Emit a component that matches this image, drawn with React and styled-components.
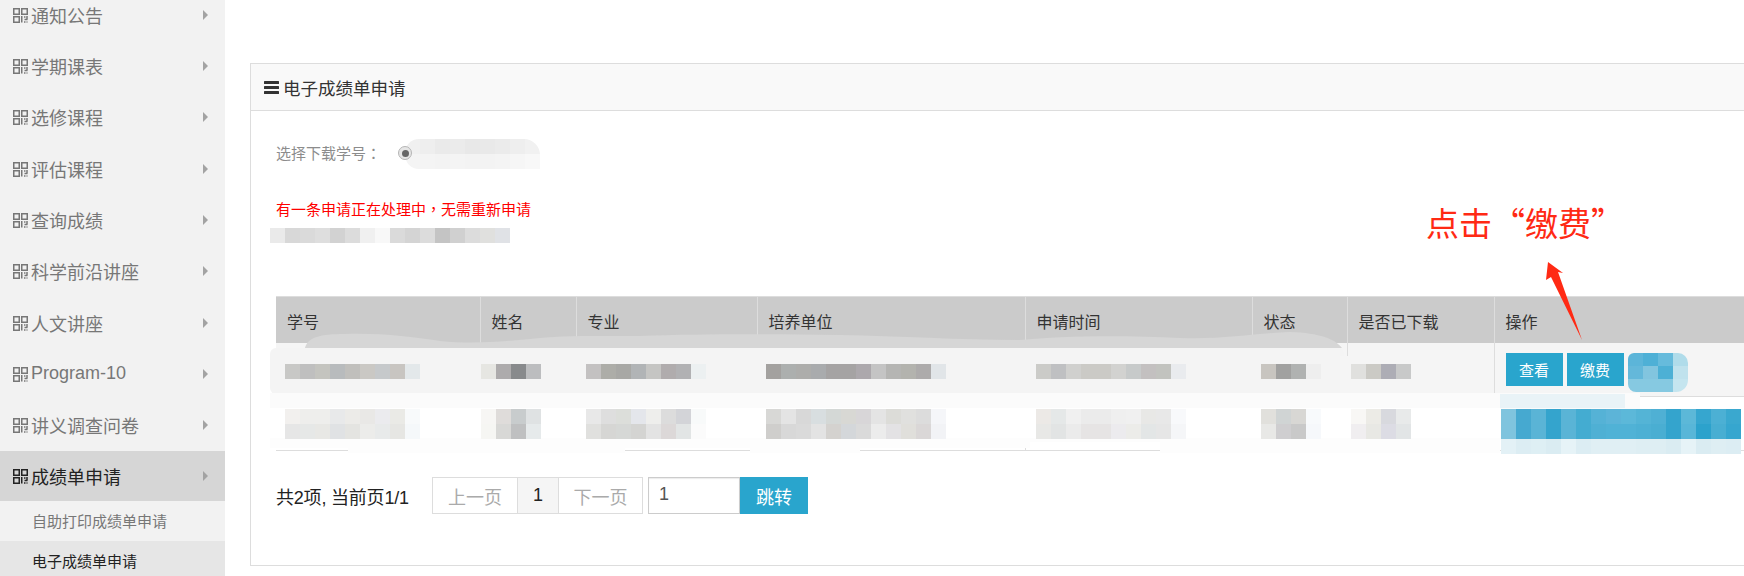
import styled, { createGlobalStyle } from "styled-components";

const GlobalStyle = createGlobalStyle`
  html, body {
    margin: 0;
    padding: 0;
    height: 576px;
    overflow: hidden;
    background: #fff;
    font-family: "Liberation Sans", "Noto Sans CJK SC", sans-serif;
  }
`;

const Page = styled.div`
  display: flex;
  width: 1744px;
  height: 576px;
  overflow: hidden;
`;

const Sidebar = styled.nav`
  flex: 0 0 225px;
  height: 576px;
  background: #f2f2f2;
  overflow: hidden;
`;

const MenuList = styled.div`
  margin-top: -11px;
`;

const MenuItem = styled.div`
  display: flex;
  align-items: center;
  height: ${(p) => (p.$active ? "50px" : "51.33px")};
  padding-left: 13px;
  font-size: 18px;
  color: ${(p) => (p.$active ? "#222" : "#777")};
  background: ${(p) => (p.$active ? "#d6d6d6" : "transparent")};
  svg {
    margin-top: 1px;
  }
`;

const MenuLabel = styled.span`
  flex: 1;
  margin-left: 3px;
`;

const Caret = styled.span`
  width: 0;
  height: 0;
  margin-right: 17px;
  border-left: 5px solid #a3a3a3;
  border-top: 5px solid transparent;
  border-bottom: 5px solid transparent;
`;

const SubItem = styled.div`
  display: flex;
  align-items: center;
  height: 40px;
  padding-left: 32px;
  font-size: 15px;
  color: ${(p) => (p.$active ? "#222" : "#777")};
  background: ${(p) => (p.$active ? "#e6e6e6" : "#f2f2f2")};
`;

const Main = styled.main`
  flex: 1;
  min-width: 0;
  padding: 63px 0 0 25px;
  overflow: hidden;
`;

const Panel = styled.section`
  position: relative;
  width: 1600px;
  height: 503px;
  box-sizing: border-box;
  border: 1px solid #ddd;
`;

const PanelHeader = styled.header`
  display: flex;
  align-items: center;
  gap: 4px;
  height: 46px;
  padding-left: 13px;
  background: #f9f9f9;
  border-bottom: 1px solid #ddd;
  font-size: 17.5px;
  color: #333;
`;

const PanelBody = styled.div`
  padding: 28px 0 0 25px;
`;

const FormRow = styled.div`
  display: flex;
  align-items: center;
  height: 30px;
  font-size: 15px;
  color: #8c8c8c;
`;

const FormLabel = styled.span`
  width: 122px;
  margin-top: -4px;
`;

const Punct = styled.span`
  font-family: "Noto Sans CJK TC", sans-serif;
`;

const Radio = styled.span`
  position: relative;
  z-index: 3;
  display: flex;
  align-items: center;
  justify-content: center;
  width: 14px;
  height: 14px;
  margin-top: -2px;
  box-sizing: border-box;
  border: 1px solid #b5b5b5;
  border-radius: 50%;
  background: #e6e6e6;
  &::after {
    content: "";
    width: 7px;
    height: 7px;
    border-radius: 50%;
    background: #666;
  }
`;

const Notice = styled.div`
  margin-top: 30px;
  margin-bottom: 1px;
  height: 20px;
  line-height: 20px;
  font-size: 15px;
  color: #ff0000;
`;

const MosaicGrid = styled.div`
  position: relative;
  z-index: 2;
  display: grid;
  grid-template-columns: repeat(${(p) => p.$cols}, 15px);
  grid-auto-rows: ${(p) => p.$rowHeight || 15}px;
  width: max-content;
  margin-left: ${(p) => p.$left || 0}px;
  margin-top: ${(p) => p.$top || 0}px;
  margin-bottom: ${(p) => p.$bottom || 0}px;
  border-radius: ${(p) => p.$radius || "0"};
  overflow: hidden;
`;

const TableWrap = styled.div`
  position: relative;
  margin-top: 53px;
  width: 1468px;
`;

const Table = styled.table`
  width: 1468px;
  table-layout: fixed;
  border-collapse: collapse;
  font-size: 16px;
  color: #333;
`;

const HeadCell = styled.th`
  height: 46px;
  box-sizing: border-box;
  padding: 2px 0 0 11px;
  background: #cbcbcb;
  border-top: 1px solid #ddd;
  border-right: 1px solid #ddd;
  font-weight: normal;
  text-align: left;
  vertical-align: middle;
`;

const Cell = styled.td`
  height: 54px;
  box-sizing: border-box;
  padding: 0;
  vertical-align: top;
  background: ${(p) => (p.$odd ? "#f5f5f5" : "#fff")};
  border-right: 1px solid #ddd;
  border-bottom: 1px solid #ddd;
`;

const Smudge = styled.svg`
  position: absolute;
  left: -26px;
  top: -12px;
  z-index: 1;
  pointer-events: none;
`;

const Actions = styled.div`
  position: relative;
  z-index: 2;
  display: flex;
  gap: 4px;
  margin: 10px 0 0 11px;
`;

const ActionButton = styled.button`
  width: 57px;
  height: 33px;
  padding: 0;
  border: 0;
  background: #29a5cd;
  color: #fff;
  font: inherit;
  font-size: 15px;
`;

const Pager = styled.div`
  display: flex;
  align-items: center;
  height: 37px;
  margin-top: 26px;
  font-size: 18px;
  color: #222;
`;

const PagerSummary = styled.span`
  width: 157px;
  letter-spacing: -0.2px;
`;

const PageLink = styled.span`
  display: flex;
  align-items: center;
  justify-content: center;
  box-sizing: border-box;
  width: ${(p) => p.$width}px;
  height: 37px;
  margin-left: -1px;
  border: 1px solid #ddd;
  color: ${(p) => (p.$current ? "#222" : "#aaa")};
  background: ${(p) => (p.$current ? "#f5f5f5" : "#fff")};
`;

const JumpInput = styled.input`
  box-sizing: border-box;
  width: 92px;
  height: 37px;
  margin-left: 5px;
  padding: 0 0 2px 10px;
  border: 1px solid #ccc;
  border-radius: 0;
  outline: 0;
  box-shadow: inset 0 1px 1px rgba(0, 0, 0, 0.08);
  font: inherit;
  color: #555;
`;

const JumpButton = styled.button`
  width: 68px;
  height: 37px;
  padding: 0;
  border: 0;
  background: #29a5cd;
  color: #fff;
  font: inherit;
`;

const Annotation = styled.div`
  position: absolute;
  left: 1175px;
  top: 135px;
  font-family: "Noto Sans CJK SC", sans-serif;
  font-size: 33px;
  line-height: 46px;
  color: #ff2a14;
  white-space: nowrap;
`;

const AnnotationArrow = styled.svg`
  position: absolute;
  left: 1290px;
  top: 195px;
  z-index: 3;
`;

const QrIcon = () => (
  <svg width="15" height="15" viewBox="0 0 15 15" fill="none" stroke="currentColor" strokeWidth="1.5">
    <rect x="0.75" y="0.75" width="5.5" height="5.5" />
    <rect x="8.75" y="0.75" width="5.5" height="5.5" />
    <rect x="0.75" y="8.75" width="5.5" height="5.5" />
    <path d="M8.75 8v6.5M11 9h1.5M14 8v3.5M11.5 11.5h3M11 14h1.5M14 13.5v1" />
  </svg>
);

const BarsIcon = () => (
  <svg width="15" height="13" viewBox="0 0 15 13" fill="#333">
    <rect y="0" width="15" height="3" rx="0.5" />
    <rect y="5" width="15" height="3" rx="0.5" />
    <rect y="10" width="15" height="3" rx="0.5" />
  </svg>
);

const Mosaic = ({ colors, cols, left, top, bottom, radius, rowHeight }) => (
  <MosaicGrid $cols={cols} $left={left} $top={top} $bottom={bottom} $radius={radius} $rowHeight={rowHeight}>
    {colors.split(" ").map((c, i) => (
      <div key={i} style={{ background: "#" + c }} />
    ))}
  </MosaicGrid>
);

const menu = ["通知公告", "学期课表", "选修课程", "评估课程", "查询成绩", "科学前沿讲座", "人文讲座", "Program-10", "讲义调查问卷"];

const columns = [
  ["学号", 204],
  ["姓名", 96],
  ["专业", 181],
  ["培养单位", 268],
  ["申请时间", 227],
  ["状态", 95],
  ["是否已下载", 147],
  ["操作", 250],
];

const rowOne = [
  { left: 9, cols: 9, colors: "c8c8c6 bfbfbf c4c4bf b8bbbd c0bfbc cac8c4 c6c9cb c8c5c1 e3e8ea" },
  { left: 0, cols: 4, colors: "e6e6e2 adabac 888a8c bcbdbf" },
  { left: 9, cols: 8, colors: "c3c1c1 adada8 a8a8a5 b1b4b6 c5c5c3 b0acad b1b1b3 ecf0f1" },
  { left: 8, cols: 12, colors: "a3a19f acafae adadab a9abad a5a3a3 a5a3a3 aca8ac c4c4c4 b5b5b3 b3b3ae adabab e1e5e8" },
  { left: 10, cols: 10, colors: "cbcbc8 bfc0c2 d0d0ce cbcac6 cbcac6 d2d2d0 c7caca c3c0c0 c2c3bf e9ebee" },
  { left: 8, cols: 4, colors: "c8c5c0 a1a1a0 b0b2b1 eeeeee" },
  { left: 3, cols: 4, colors: "e0e0de cbcac5 adadb5 c8c9c9" },
];

const rowTwo = [
  { left: 9, cols: 9, colors: "f2f0ee eeeeec eeeeec e8e9ea ecebe8 e9e8e6 ebebee eaeae6 f8fafb e6e6e6 e6e8e7 e8e8e5 e0e2e4 e4e4e1 ececea e8eaea e6e6e3 f5f8fa" },
  { left: 0, cols: 4, colors: "f7f6f4 dfdcda c8cccd dfe2e3 f6f6f3 d8d8d6 bfc0c1 e6eaeb" },
  { left: 9, cols: 8, colors: "e8e8e8 dedede dcdeda e4e6eb eeeeec dcdcdc d3d4d8 f8fafa e0e0de d6d6d4 d6d8d6 d4d4d2 e3e3e3 dcd8d8 e2e5e5 fbfbfb" },
  { left: 8, cols: 12, colors: "d8d8d6 e4e4e4 d8d8d8 d8dee0 d4d8d6 d8d8d4 d8d6d8 e4e4e4 dcdcd8 e0e0de dcdcdc f5f6f9 cfcecc d8d8d8 dadada e3e3e3 d4d2cf d4d7da dadada ececec e3e2e4 e0dfdb dad7d7 f2f3f6" },
  { left: 10, cols: 10, colors: "ece9e6 e5e8e8 f0f0f0 ebebeb ebebeb efefef f0f0f0 e8e8e6 e8e8e8 f8f9fb e8e8e6 e2e4e4 ebebeb e6e4e4 e6e4e4 ecebee ecece9 e3e6e6 e6e6e6 f5f6f8" },
  { left: 8, cols: 4, colors: "e1e0dc d0d4d4 d8d7d4 f8fafc e8e8e6 cfced0 c9c9c9 f6f8fb" },
  { left: 3, cols: 4, colors: "f8f7f5 ecebe6 d8d9de e8eaea f0eef0 e8e8e4 dcdce4 e2e5e6" },
];

const blueRows =
  "7fc4de 46a9d0 5ab4d6 34a4cd 5ab4d6 44acd1 55b2d6 5cb4d8 5cb8d9 54b4d6 4fb0d4 34a4cd 5cb8d8 36a6cf 4cb0d4 3aa8cf " +
  "7fc4de 46a9d0 5ab4d6 34a4cd 5ab4d6 44acd1 4fb0d4 50b2d6 50b2d6 4db0d4 4aaed2 34a4cd 58b6d8 2ca2cc 48aed2 36a6cf " +
  "e3f1f6 dcedf3 deeff4 daecf2 e6f3f7 dcedf3 e0eff4 e0eff4 e0eff4 deeef3 deeef3 daecf2 e6f3f7 daecf2 deeef3 dcedf3";

const App = () => {
  return (
    <Page>
      <GlobalStyle />
      <Sidebar>
        <MenuList>
          {menu.map((m) => (
            <MenuItem key={m}>
              <QrIcon />
              <MenuLabel>{m}</MenuLabel>
              <Caret />
            </MenuItem>
          ))}
          <MenuItem $active>
            <QrIcon />
            <MenuLabel>成绩单申请</MenuLabel>
            <Caret />
          </MenuItem>
          <SubItem>自助打印成绩单申请</SubItem>
          <SubItem $active>电子成绩单申请</SubItem>
        </MenuList>
      </Sidebar>
      <Main>
        <Panel>
          <PanelHeader>
            <BarsIcon />
            电子成绩单申请
          </PanelHeader>
          <PanelBody>
            <FormRow>
              <FormLabel>
                选择下载学号<Punct>：</Punct>
              </FormLabel>
              <Radio />
              <Mosaic
                cols={9}
                left={-7}
                radius="14px 16px 0 14px"
                colors="f0f0f0 eeeeee eaeaea ebebeb e8e8e8 e9e9e9 ebebeb eeeeee f1f1f1 f4f4f4 f4f4f4 f3f3f3 f4f4f4 f3f3f3 f3f3f3 f4f4f4 f6f6f6 f8f8f8"
              />
            </FormRow>
            <Notice>
              有一条申请正在处理中<Punct>，</Punct>无需重新申请
            </Notice>
            <Mosaic
              cols={16}
              left={-6}
              top={9}
              colors="eaeaea d8d8d8 dadada dedede d2d2d2 dcdcdc f0f0f0 f8f8f8 dadada d4d4d4 dcdcdc c4c4c4 d0d0d0 dcdcdc e0e0de e0e2e6"
            />
            <TableWrap>
              <Table>
                <colgroup>
                  {columns.map(([name, w]) => (
                    <col key={name} width={w} />
                  ))}
                </colgroup>
                <thead>
                  <tr>
                    {columns.map(([name]) => (
                      <HeadCell key={name}>{name}</HeadCell>
                    ))}
                  </tr>
                </thead>
                <tbody>
                  <tr>
                    {rowOne.map((m, i) => (
                      <Cell $odd key={i}>
                        <Mosaic cols={m.cols} left={m.left} top={21} colors={m.colors} />
                      </Cell>
                    ))}
                    <Cell $odd>
                      <Actions>
                        <ActionButton>查看</ActionButton>
                        <ActionButton>缴费</ActionButton>
                        <Mosaic
                          cols={4}
                          rowHeight={13}
                          radius="6px 10px 12px 8px"
                          colors="5cb5d9 4eb0d6 66bbdc b0dcea 64b8da 82c5df 4db0d5 c0e2ed 86c9e1 86c9e1 86c9e1 c5e5ef"
                        />
                      </Actions>
                    </Cell>
                  </tr>
                  <tr>
                    {rowTwo.map((m, i) => (
                      <Cell key={i}>
                        <Mosaic cols={m.cols} left={m.left} top={12} colors={m.colors} />
                      </Cell>
                    ))}
                    <Cell>
                      <Mosaic cols={16} left={6} top={12} bottom={-10} colors={blueRows} />
                    </Cell>
                  </tr>
                </tbody>
              </Table>
              <Smudge width="1500" height="180" viewBox="0 0 1500 180">
                <g transform="translate(-250 -285)">
                  <path
                    d="M305 349C308 338 320 335 345 335C385 334 410 338 440 342C470 345 500 343 530 340C560 336 600 337 640 337C700 335 760 335 840 336C900 337 960 341 1020 341C1060 337 1120 336 1180 339C1220 341 1260 334 1290 333C1320 334 1335 340 1342 349Z"
                    fill="#d6d6d6"
                  />
                  <rect x="270" y="349" width="1074" height="46" rx="6" fill="#f4f4f4" />
                  <rect x="1340" y="357" width="152" height="38" fill="#f5f5f5" />
                  <rect x="270" y="394" width="1370" height="16" fill="#fbfbfb" />
                  <rect x="1500" y="395" width="125" height="14" fill="#e9f3f7" />
                  <rect x="270" y="409" width="1230" height="34" fill="#fff" />
                  <path d="M270 439H1500V454H1160V449H860V454H750V449H625V454H348V449H270Z" fill="#fdfdfd" />
                  <rect x="1030" y="443" width="130" height="6" fill="#fff" />
                </g>
              </Smudge>
            </TableWrap>
            <Pager>
              <PagerSummary>共2项, 当前页1/1</PagerSummary>
              <PageLink $width={86}>上一页</PageLink>
              <PageLink $width={42} $current>1</PageLink>
              <PageLink $width={85}>下一页</PageLink>
              <JumpInput defaultValue="1" />
              <JumpButton>跳转</JumpButton>
            </Pager>
          </PanelBody>
          <Annotation>点击“缴费”</Annotation>
          <AnnotationArrow width="45" height="85" viewBox="0 0 45 85">
            <path d="M7 3L5 21L10 18L41 81L17 13L22 14Z" fill="#ff2a14" />
          </AnnotationArrow>
        </Panel>
      </Main>
    </Page>
  );
};

export default App;
